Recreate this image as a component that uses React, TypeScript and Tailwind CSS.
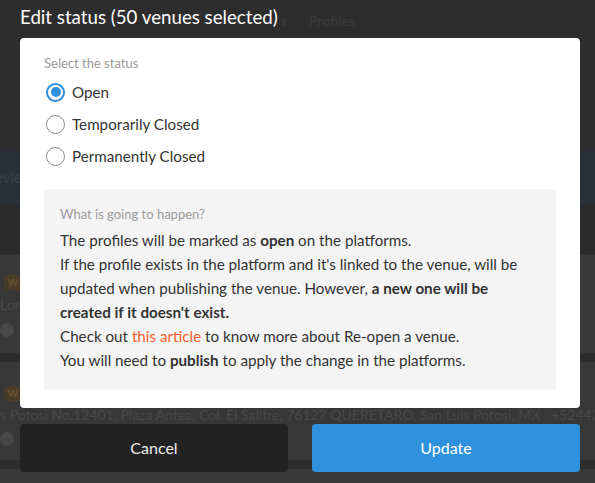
import { useState } from "react"

const font = { fontFamily: "Lato, 'Noto Sans', sans-serif" }

const statuses = ["Open", "Temporarily Closed", "Permanently Closed"]

function Radio({ checked }: { checked: boolean }) {
  return checked ? (
    <span className="flex size-[19px] shrink-0 items-center justify-center rounded-full border-2 border-[#2e90dd]">
      <span className="size-[10px] rounded-full bg-[#2e90dd]" />
    </span>
  ) : (
    <span className="size-[19px] shrink-0 rounded-full border-[1.5px] border-[#8a8a8a]" />
  )
}

// dimmed page behind the modal
function BackgroundPage() {
  return (
    <div className="flex h-[483px] flex-col overflow-hidden bg-[#2d2d2d] text-[#3b3b3b]">
      <div className="flex h-[150px] shrink-0 items-start pl-[281px] pt-[10px] text-[14px]">
        <span className="mr-[22px]">s</span>
        <span>Profiles</span>
      </div>
      <div className="flex h-[55px] shrink-0 items-center bg-[#2a3035] text-[15px] text-[#3a4147]">
        <span className="-ml-[14px]">Revie</span>
      </div>
      <div className="h-[50px] shrink-0 bg-[#2b2b2b]" />
      <div className="flex h-[98px] shrink-0 flex-col gap-[4px] bg-[#383838] pl-[4px] pt-[20px] text-[14px] text-[#484848]">
        <span className="flex h-[15px] w-[18px] items-center justify-center rounded-sm bg-[#4b3c27] text-[10px] font-bold text-[#6a5334]">W</span>
        <span className="-ml-[4px]">Lom</span>
        <span className="-ml-[4px] flex items-center gap-2">
          <span className="size-[14px] rounded-full bg-[#484848]" />
          In
        </span>
      </div>
      <div className="h-[9px] shrink-0 bg-[#2c2c2c]" />
      <div className="flex h-[98px] shrink-0 flex-col gap-[3px] bg-[#383838] pl-[4px] pt-[24px] text-[14px] text-[#484848]">
        <span className="flex h-[15px] w-[18px] items-center justify-center rounded-sm bg-[#4b3c27] text-[10px] font-bold text-[#6a5334]">W</span>
        <span className="-ml-[4px] whitespace-nowrap">
          s Potosi No.12401, Plaza Antea, Col. El Salitre, 76127 QUERETARO, San Luis Potosi, MX &nbsp;&nbsp;+524423426784
        </span>
        <span className="-ml-[4px] flex items-center gap-2">
          <span className="size-[14px] rounded-full bg-[#484848]" />
          In
        </span>
      </div>
      <div className="h-[9px] shrink-0 bg-[#2c2c2c]" />
      <div className="flex-1 bg-[#383838]" />
    </div>
  )
}

export default function App() {
  const [status, setStatus] = useState("Open")

  return (
    <div className="relative h-[483px] w-[595px] overflow-hidden" style={font}>
      <BackgroundPage />

      <div className="absolute inset-0 flex flex-col pl-[20px]">
        <div className="h-[38px] pt-[5px]">
          <h2 className="inline-block text-[18.7px] leading-[24px] text-white">
            Edit status (50 venues selected)
          </h2>
        </div>

        <div className="flex h-[370px] w-[560px] flex-col rounded-[4px] bg-white px-[24px] pt-[16px]">
          <p className="text-[13px] leading-[18px] text-[#9a9a9a]">Select the status</p>

          <div className="mt-[4px] flex flex-col">
            {statuses.map((s) => (
              <label
                key={s}
                onClick={() => setStatus(s)}
                className="flex h-[32px] cursor-pointer items-center gap-[7px] pl-[2px] text-[15.2px] text-[#333]"
              >
                <Radio checked={status === s} />
                {s}
              </label>
            ))}
          </div>

          <div className="mt-[17px] h-[201px] rounded-[4px] bg-[#f4f4f4] px-[16px] pt-[15px] text-[15.2px] leading-[24px] text-[#333]">
            <p className="text-[13px] leading-[20px] text-[#9a9a9a]">What is going to happen?</p>
            <div className="mt-[4px] whitespace-nowrap">
              The profiles will be marked as <b>open</b> on the platforms.
              <br />
              If the profile exists in the platform and it's linked to the venue, will be
              <br />
              updated when publishing the venue. However, <b>a new one will be</b>
              <br />
              <b>created if it doesn't exist.</b>
              <br />
              Check out <span className="text-[#f5602c]">this article</span> to know more about Re-open a venue.
              <br />
              You will need to <b>publish</b> to apply the change in the platforms.
            </div>
          </div>
        </div>

        <div className="mt-[16px] grid w-[560px] grid-cols-2 gap-[24px]">
          <button className="h-[48px] rounded-[4px] bg-[#222222] text-[16px] text-[#eeeeee]">Cancel</button>
          <button className="h-[48px] rounded-[4px] bg-[#2e91dd] text-[16px] text-white">Update</button>
        </div>
      </div>
    </div>
  )
}
